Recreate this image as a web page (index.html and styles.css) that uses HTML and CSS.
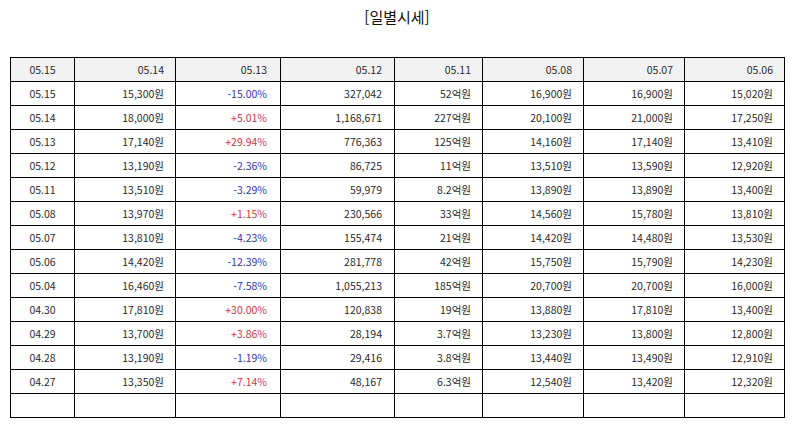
FILE: index.html
```html
<!DOCTYPE html>
<html lang="ko">
<head>
<meta charset="utf-8">
<title>일별시세</title>
<link rel="stylesheet" href="styles.css">
</head>
<body>
<div class="page">
  <h1 class="title">[일별시세]</h1>
  <table class="quotes">
    <colgroup>
      <col class="w1"><col class="w2"><col class="w3"><col class="w4"><col class="w5"><col class="w6"><col class="w7"><col class="w8">
    </colgroup>
    <thead>
      <tr><th>05.15</th><th>05.14</th><th>05.13</th><th>05.12</th><th>05.11</th><th>05.08</th><th>05.07</th><th>05.06</th></tr>
    </thead>
    <tbody>
      <tr><td>05.15</td><td>15,300원</td><td class="down">-15.00%</td><td>327,042</td><td>52억원</td><td>16,900원</td><td>16,900원</td><td>15,020원</td></tr>
      <tr><td>05.14</td><td>18,000원</td><td class="up">+5.01%</td><td>1,168,671</td><td>227억원</td><td>20,100원</td><td>21,000원</td><td>17,250원</td></tr>
      <tr><td>05.13</td><td>17,140원</td><td class="up">+29.94%</td><td>776,363</td><td>125억원</td><td>14,160원</td><td>17,140원</td><td>13,410원</td></tr>
      <tr><td>05.12</td><td>13,190원</td><td class="down">-2.36%</td><td>86,725</td><td>11억원</td><td>13,510원</td><td>13,590원</td><td>12,920원</td></tr>
      <tr><td>05.11</td><td>13,510원</td><td class="down">-3.29%</td><td>59,979</td><td>8.2억원</td><td>13,890원</td><td>13,890원</td><td>13,400원</td></tr>
      <tr><td>05.08</td><td>13,970원</td><td class="up">+1.15%</td><td>230,566</td><td>33억원</td><td>14,560원</td><td>15,780원</td><td>13,810원</td></tr>
      <tr><td>05.07</td><td>13,810원</td><td class="down">-4.23%</td><td>155,474</td><td>21억원</td><td>14,420원</td><td>14,480원</td><td>13,530원</td></tr>
      <tr><td>05.06</td><td>14,420원</td><td class="down">-12.39%</td><td>281,778</td><td>42억원</td><td>15,750원</td><td>15,790원</td><td>14,230원</td></tr>
      <tr><td>05.04</td><td>16,460원</td><td class="down">-7.58%</td><td>1,055,213</td><td>185억원</td><td>20,700원</td><td>20,700원</td><td>16,000원</td></tr>
      <tr><td>04.30</td><td>17,810원</td><td class="up">+30.00%</td><td>120,838</td><td>19억원</td><td>13,880원</td><td>17,810원</td><td>13,400원</td></tr>
      <tr><td>04.29</td><td>13,700원</td><td class="up">+3.86%</td><td>28,194</td><td>3.7억원</td><td>13,230원</td><td>13,800원</td><td>12,800원</td></tr>
      <tr><td>04.28</td><td>13,190원</td><td class="down">-1.19%</td><td>29,416</td><td>3.8억원</td><td>13,440원</td><td>13,490원</td><td>12,910원</td></tr>
      <tr><td>04.27</td><td>13,350원</td><td class="up">+7.14%</td><td>48,167</td><td>6.3억원</td><td>12,540원</td><td>13,420원</td><td>12,320원</td></tr>
      <tr><td></td><td></td><td></td><td></td><td></td><td></td><td></td><td></td></tr>
    </tbody>
  </table>
</div>
</body>
</html>
```

FILE: styles.css
```css
html, body {
  margin: 0;
  padding: 0;
  background: #ffffff;
}
.page {
  padding: 0 10px;
  font-family: "Noto Sans CJK KR", "Noto Sans", sans-serif;
  color: #2a2a2a;
}
.title {
  margin: 0;
  padding-top: 6px;
  height: 57px;
  box-sizing: border-box;
  text-align: center;
  font-size: 15px;
  font-weight: normal;
  line-height: 22px;
  color: #111111;
}
.quotes {
  width: 774px;
  border-collapse: collapse;
  table-layout: fixed;
  font-size: 10.5px;
}
.w1 { width: 64px; }
.w2 { width: 101px; }
.w3 { width: 105px; }
.w4 { width: 114px; }
.w5 { width: 88px; }
.w6 { width: 101px; }
.w7 { width: 101px; }
.w8 { width: 100px; }
.quotes tr {
  height: 24px;
}
.quotes th,
.quotes td {
  border: 1px solid #000000;
  padding: 0 11px 0 4px;
  text-align: right;
  font-weight: normal;
  line-height: 14px;
  white-space: nowrap;
}
.quotes th {
  background: #f2f2f2;
}
.quotes th:nth-child(3),
.quotes td:nth-child(3) {
  padding-right: 13px;
}
.quotes th:nth-child(4),
.quotes td:nth-child(4) {
  padding-right: 12px;
}
.quotes th:first-child,
.quotes td:first-child {
  text-align: center;
  padding: 0;
}
.quotes .up { color: #e0303a; }
.quotes .down { color: #3333cc; }
```
